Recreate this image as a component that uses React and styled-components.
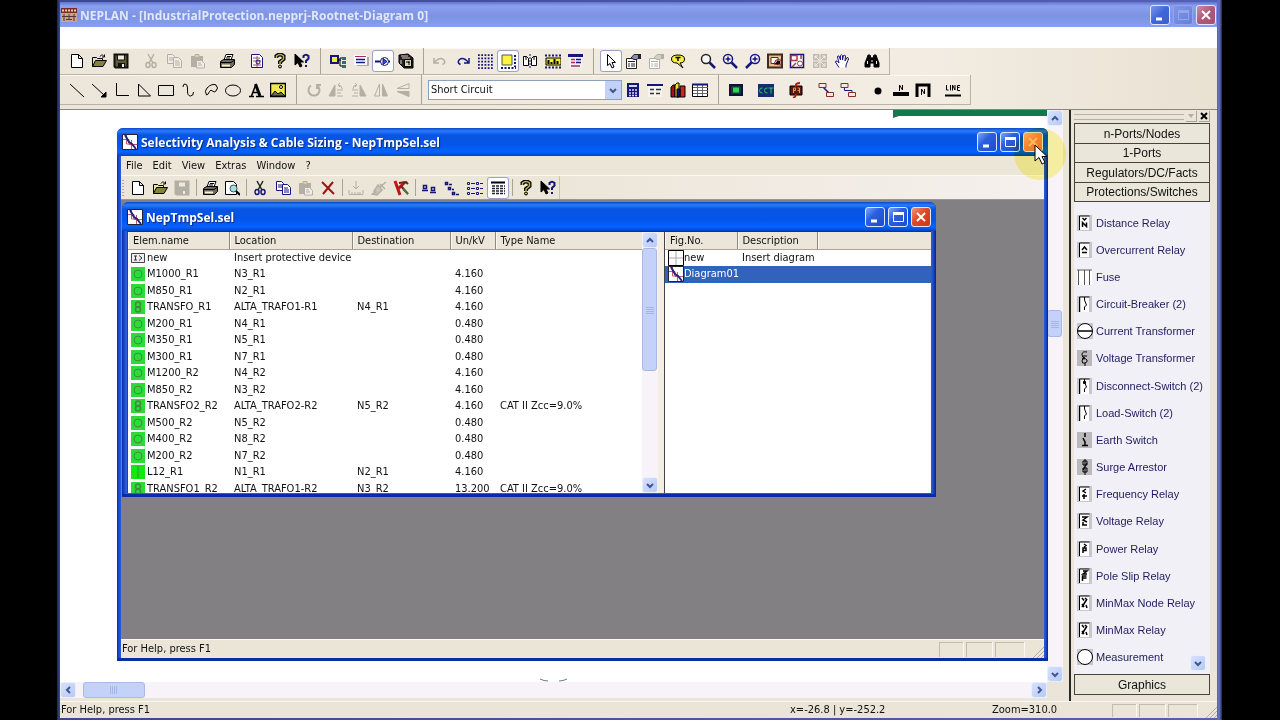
import React from "react";
import styled, { createGlobalStyle, css } from "styled-components";

const ui = `"DejaVu Sans Condensed", "Noto Sans", sans-serif`;
const caption = `"Open Sans", "Noto Sans", sans-serif`;
const arial = `"Liberation Sans", Arial, sans-serif`;

const GlobalStyle = createGlobalStyle`
  *, *::before, *::after { box-sizing: border-box; }
  body { margin: 0; background: #000; color: #111; font-family: ${ui}; font-size: 11px; line-height: 16px; }
  button, select { font: inherit; color: inherit; }
  button { margin: 0; padding: 0; border: 0; background: none; }
`;

/* ---------- icons ---------- */

const Svg = styled.svg`
  display: block;
  flex: none;
  width: ${(p) => p.$w || 16}px;
  height: ${(p) => p.$h || 16}px;
  fill: none;
  stroke: #000;
  stroke-width: 1;
`;

const navy = "#15157c";
const grey = "#b4afa4";

const paper = <path d="M2.5 1.5h7l4 4v9h-11zM9.5 1.5v4h4" fill="#fff" />;
const folder = (
  <>
    <path d="M1.5 13.5v-9h4l1 1h5v2" fill="#e9e4a0" />
    <path d="M1.5 13.5l3-6h11l-3.500 6z" fill="#85833a" />
    <path d="M9 3.500c1-2 3-2 4 0M13.500 1.500v2.500h-2.500" />
  </>
);
const floppy = (c, f) => (
  <>
    <path d="M1.500 1.500h13v13h-12l-1-1z" fill={f} stroke={c} strokeWidth="2" />
    <path d="M4.500 2h7v5h-7z" fill="#eeeae0" stroke={c} />
    <path d="M5 10h7v4h-7z" fill={c} stroke="none" />
    <path d="M9 11h2v3h-2z" fill="#eee" stroke="none" />
  </>
);
const scissors = (a, b) => (
  <>
    <path d="M5 1l5 9M11 1l-5 9" stroke={a} strokeWidth="1.500" />
    <ellipse cx="5" cy="12" rx="2" ry="2.500" stroke={b} strokeWidth="1.500" />
    <ellipse cx="11" cy="12" rx="2" ry="2.500" stroke={b} strokeWidth="1.500" />
  </>
);
const copy = (c, f) => (
  <>
    <path d="M1.500 1.500h5l2 2v7h-7zM3 5h4M3 7h4" fill={f} stroke={c} />
    <path d="M7.500 4.500h5l3 3v7h-8zM9 8h4M9 10h5M9 12h5" fill={f} stroke={c} />
  </>
);
const paste = (
  <>
    <path d="M2 3h12v11H2z" fill={grey} stroke="none" />
    <path d="M6 1.500h4v3H6z" fill="#d8d2a4" stroke={grey} />
    <path d="M7.500 7.500h5l3 3v4.500h-8zM9 10h3M9 12h4" fill="#f1ede6" stroke={grey} />
  </>
);
const printer = (
  <>
    <path d="M5 7l2-5.500h7L12 7" fill="#fff" />
    <path d="M1.500 8.500l3-2h11v5l-3 3h-11z" fill="#6c6a5e" />
    <path d="M2 9.500h10l3-2M8 3.500h4M7 5h4" />
    <path d="M3 12.500h8" stroke="#f4f0c8" strokeWidth="2" />
  </>
);
const question = (
  <>
    <path d="M4.500 5V3q3.500-3 7 0v3l-3.500 3v2" strokeWidth="4" />
    <path d="M4.500 5V3q3.500-3 7 0v3l-3.500 3v2" stroke="#b9b54c" strokeWidth="1.500" />
    <circle cx="8" cy="13.500" r="1.500" fill="#b9b54c" />
  </>
);
const contextHelp = (
  <>
    <path d="M1 1v11l3-2.500 2 4.500 2-1-2-4h3.500z" fill="#000" />
    <path d="M9.500 5V3q2.500-2.500 5 0v2.500L12 8v2M12 12v2" stroke={navy} strokeWidth="2" />
  </>
);
const lens = (mark, flip) => (
  <g transform={flip ? "translate(16 0) scale(-1 1)" : undefined}>
    <circle cx="6" cy="6" r="4.500" fill="#f7f6f6" stroke={flip || mark ? navy : "#222"} strokeWidth="1.500" />
    <path d="M9.500 9.500l5.500 5.500" stroke={navy} strokeWidth="2.500" />
    {mark}
  </g>
);
const propsheet = (c, f) => (
  <>
    <path d="M1.500 5.500h10v10h-10zM3 8.500h7M3 11h2M6 11h4M3 13h2M6 13h4" fill="#fff" stroke={c} />
    <path d="M6 5l3-3.500h4l2 2-3 3H9z" fill={f} stroke={c} />
    <path d="M13 1h3v5h-3z" fill={c} stroke="none" />
  </>
);
const pair = (c) => <path d="M1 1.500h7v4H1zM8.500 10.500h7v4h-7z" fill="#f7e9e3" stroke={c} />;

const icons = {
  page: paper,
  open: folder,
  save: floppy("#111", "#5a5b32"),
  saveOff: floppy(grey, grey),
  cutOff: scissors(grey, grey),
  cut: scissors("#222", navy),
  copyOff: copy(grey, "#f1ede6"),
  copy: copy(navy, "#fff"),
  paste,
  printer,
  pageView: (
    <>
      <path d="M2.500 1.500h8l3 3v10h-11z" fill="#fff" stroke={navy} />
      <path d="M4 5h7M4 8h8M4 12h8M8 3v11" stroke="#a04876" />
      <circle cx="9" cy="9" r="2" stroke={navy} />
    </>
  ),
  preview: (
    <>
      <path d="M1.500 1.500h8l3 3v10h-11z" fill="#fff" />
      <circle cx="9.500" cy="8.500" r="3.500" fill="#a9dfe2" stroke="#34555a" />
      <path d="M12 11l4 4" strokeWidth="2" />
    </>
  ),
  question,
  contextHelp,
  tree: (
    <>
      <path d="M1 3h7v7H1z" fill="#f0ee3c" stroke={navy} strokeWidth="2" />
      <path d="M8 7h3M10 5v8M10 5h2M10 13h2" />
      <path d="M12 4h4v3h-4zM12 8h4v3h-4zM12 12h4v3h-4z" fill="#3a6b6b" stroke="none" />
    </>
  ),
  note: (
    <>
      <path d="M4 4h12v9H4z" fill="#aaa" stroke="none" />
      <path d="M1 2h13v10H1z" fill="#fff" stroke="none" />
      <path d="M2 3.500h11" stroke="#b32a58" />
      <path d="M3 6.500h9M3 9.500h9" stroke={navy} strokeWidth="1.500" />
    </>
  ),
  node: (
    <>
      <path d="M0 8.500h6M13 8.500h2" stroke={navy} strokeWidth="2" />
      <circle cx="9.500" cy="8.500" r="4" fill="#fff" stroke={navy} />
      <path d="M8 5.500l4 3-4 3z" fill="#2a54e0" stroke={navy} />
    </>
  ),
  cube: (
    <>
      <path d="M1 2l9-1 5 4v10H6l-5-5z" fill="#222" />
      <path d="M6.500 6.500h7v7h-7z" fill="#d8d7ad" />
      <path d="M3 3h7M4 5h8" stroke="#e9c7c7" />
      <path d="M3 7v4" stroke="#ddd" />
      <path d="M8 9h3v3M11 8v2" />
    </>
  ),
  undo: <path d="M2 5v5h5M2.500 9.500q5-6 9-3 3 3-1 5" stroke={grey} strokeWidth="1.500" />,
  redo: <path d="M14 5v5H9M13.500 9.500q-5-6-9-3-3 3 1 5" stroke={navy} strokeWidth="1.500" />,
  dots: (
    <path
      d="M1 2h15M1 5.250h15M1 8.500h15M1 11.750h15M1 15h15"
      stroke={navy}
      strokeWidth="1.750"
      strokeDasharray="1.750 1.500"
    />
  ),
  select: (
    <>
      <path d="M2 2h10v10H2z" fill="#fbf53c" stroke="#555" />
      <path d="M1 15h15M15 2v12" stroke={navy} strokeWidth="2" strokeDasharray="2 1.500" />
    </>
  ),
  mirror: (
    <>
      <path d="M1.500 3.500h3l2 2v7h-5zM14.500 3.500h-3l-2 2v7h5zM4 3v4M12 3v4" fill="#fff" />
      <path d="M8 1v14" stroke={navy} strokeDasharray="2 1" />
    </>
  ),
  ruler: (
    <>
      <path d="M1 5h15v7H1z" fill="#f0ea3a" />
      <path d="M3.500 7v4M6.500 9v2M9.500 6v5M12.500 8v3" strokeWidth="2" />
      <path d="M0 2.500h16M0 14.500h16" stroke={navy} strokeWidth="2" strokeDasharray="2 1.500" />
    </>
  ),
  sheet: (
    <>
      <path d="M2 2h13v13H2z" fill="#f2f1fa" stroke="none" />
      <path d="M1 2.500h15" stroke={navy} strokeWidth="3" />
      <path d="M4 6.500h4M4 9.500h4M4 13h9" stroke="#b12b50" strokeWidth="1.500" />
      <path d="M9 6.500h5M9 9.500h5" stroke={navy} strokeWidth="1.500" />
    </>
  ),
  pointer: <path d="M4.500 1.500v11l2.500-2 2 4.500 2-1-2-4.500h3.500z" fill="#fff" />,
  props: propsheet("#222", "#8a8cb4"),
  propsOff: propsheet(grey, "#d3cec4"),
  speech: (
    <>
      <path d="M1.500 6q0-4 6.500-4t6.500 4-4.500 4l3 5-6-5q-5.500 0-5.500-4z" fill="#f3ee45" />
      <path d="M5.500 4.500h5M8 4.500V8" strokeWidth="1.500" />
    </>
  ),
  zoom: lens(null, false),
  zoomIn: lens(<path d="M6 3.500v5M3.500 6h5" stroke={navy} strokeWidth="1.500" />, false),
  zoomOut: lens(<path d="M6 3.500v5M3.500 6h5" stroke={navy} strokeWidth="1.500" />, true),
  fit: (
    <>
      <path d="M1 1.500h14v13H1z" fill="#e9c089" stroke="#3f2b20" strokeWidth="2" />
      <path d="M4 4.500h7v6H4zM7 11l2-4h5v5z" fill="#fff" stroke="#7b1d1d" />
      <path d="M8 11l2-3h3v3z" fill="#111" stroke="none" />
    </>
  ),
  overview: (
    <>
      <path d="M1.500 1.500h13v13h-13z" fill="#fff" stroke={navy} strokeWidth="1.500" />
      <path d="M2 2.500h6v5H2zM3 14l4-4M12 2v4" stroke="#a73a3a" strokeWidth="1.500" />
      <circle cx="11" cy="10.500" r="2.500" stroke="#a73a3a" />
    </>
  ),
  arrowsOff: (
    <>
      <path d="M1 1h14v14H1z" fill="#c0bbae" stroke="none" />
      <path d="M3 3l4 4M3 6V3h3M13 3L9 7M10 3h3v3M3 13l4-4M3 10v3h3M13 13L9 9M10 13h3v-3M8 1v14M1 8h14" stroke="#f4f1ea" />
    </>
  ),
  hand: (
    <path
      d="M5 14.500L1.500 9q0-2 2-.500L5 10 3.500 4q0-1.500 1.500-1l1.500 4V2.500q1-1.500 2 0V7l1-4.500q1.500-1 2 .500L11 8l2-3.500q1.500 0 1.500 1.500L12 12v2.500"
      fill="#fff"
      stroke={navy}
    />
  ),
  binoculars: (
    <>
      <path d="M3 5l1-3h2l1 3h2l1-3h2l1 3 2 5v4h-5v-4H6v4H1v-4z" fill="#000" />
      <path d="M3.500 11V8M12.500 11V8M8 7v2" stroke="#eee" />
    </>
  ),
  line: <path d="M1 2l14 13" />,
  arrow: (
    <>
      <path d="M1 2l12 11" />
      <path d="M15 15v-5l-5 5z" fill="#000" />
    </>
  ),
  polyline: <path d="M2.500 1v12.500H15" />,
  triangle: <path d="M2.500 2v12h12z" />,
  rect: <path d="M.500 3.500h15v10H.500z" />,
  curve: <path d="M2 5q0-3 2-3 2.500 0 2.500 4v3q0 5 3 5 3 0 3-4" />,
  blob: <path d="M3.500 13Q1 9 4 6q5-5 9-3 3 3 0 6-2 2-3.500 0-1.500-2-3 .500-1 3-3 3.500z" />,
  ellipse: <ellipse cx="8" cy="8.500" rx="7.500" ry="5.500" />,
  letter: (
    <>
      <path d="M1 14.500h5M8 14.500h8M5 10.500h6" strokeWidth="1.500" />
      <path d="M3.500 14L8 2" strokeWidth="1.500" />
      <path d="M7.500 2l4.500 12" strokeWidth="3" />
    </>
  ),
  picture: (
    <>
      <path d="M.500 1.500h15v13H.500z" fill="#f1e94b" strokeWidth="1.500" />
      <path d="M1 14l4-5 3 3 3-2 4 4z" fill="#6c6b50" />
      <circle cx="11" cy="5" r="1.500" fill="#fff" />
    </>
  ),
  rotateOff: <path d="M5 3.500a5.500 5.500 0 1 0 6 0M11 7V3h4" stroke={grey} strokeWidth="2" />,
  rotLeftOff: (
    <>
      <path d="M1 14l6-11v11zM9 8h6M9 11h4M9 14h6" fill={grey} stroke={grey} />
      <path d="M14 7q0-4-4-4M12 1l-2 2 2 2" stroke={grey} />
    </>
  ),
  rotRightOff: (
    <>
      <path d="M15 14L9 3v11zM7 8H1M7 11H3M7 14H1" fill={grey} stroke={grey} />
      <path d="M2 7q0-4 4-4M4 1l2 2-2 2" stroke={grey} />
    </>
  ),
  flipHOff: (
    <>
      <path d="M9.500 2v12h5z" fill={grey} stroke={grey} />
      <path d="M6.500 2v12h-5z" stroke={grey} />
    </>
  ),
  flipVOff: (
    <>
      <path d="M14 9.500H2l12 5z" fill={grey} stroke={grey} />
      <path d="M14 6.500H2l12-5z" stroke={grey} />
    </>
  ),
  calculator: (
    <>
      <path d="M2 1h12v14H2z" fill={navy} stroke="none" />
      <path d="M4 4h8" stroke="#cde" strokeWidth="2" />
      <path d="M4 8h8M4 11h8M4 13.500h8" stroke="#dde" strokeWidth="1.500" strokeDasharray="2 1" />
    </>
  ),
  report: (
    <>
      <path d="M1 3h14v12H1z" fill="#f6f4f1" stroke="none" />
      <path d="M0 3h16" stroke={navy} strokeWidth="2" />
      <path d="M3 7.500h4M9 7.500h5M3 11.500h4M9 11.500h4" stroke="#333" strokeWidth="1.500" />
    </>
  ),
  bars: (
    <>
      <path d="M1 15V5l2-2h2v12z" fill="#a11" />
      <path d="M5 15V3l2-2h2v14z" fill="#e9e23c" />
      <path d="M10 15V4h5v11z" fill="#c22" />
      <path d="M7 15V7h3v8z" fill={navy} />
    </>
  ),
  grid: (
    <>
      <path d="M.500 2.500h15v12H.500z" fill="#fff" />
      <path d="M1 5.500h15M1 8.500h15M1 11.500h15M5.500 3v11M10.500 3v11" stroke="#666" />
      <path d="M0 2.500h16" stroke={navy} strokeWidth="2" />
    </>
  ),
  chip: (
    <>
      <path d="M2 3h12v10H2z" fill="#173b2c" stroke="#101040" strokeWidth="2" />
      <path d="M5 5.500h6v5H5z" fill="#29d35c" stroke="none" />
    </>
  ),
  cct: (
    <>
      <path d="M0 2h16v13H0z" fill="#152d6c" stroke="none" />
      <path d="M4.500 6q-3-.500-3 2.500t3 2.500M9.500 6q-3-.500-3 2.500t3 2.500M10.500 6h5M13 6v5.500" stroke="#2dc763" />
    </>
  ),
  fault: (
    <>
      <path d="M2 4h12v9H2z" fill="#5b1713" />
      <path d="M5.500 11V6h2v2.500h-2M9.500 6h2v5M9.500 8.500h2" stroke="#e2a13c" />
      <path d="M12 1Q7 1 8 5M8 12q0 3-3 4" stroke="#b41c10" strokeWidth="2" />
    </>
  ),
  linkA: (
    <>
      <path d="M5 5l6 6" stroke={navy} strokeWidth="1.500" />
      {pair("#8a2b2b")}
    </>
  ),
  linkB: (
    <>
      <path d="M4.500 5v3.500h7.500v2" stroke={navy} />
      {pair("#8a2b2b")}
    </>
  ),
  bullet: <circle cx="8" cy="9" r="3.500" fill="#000" stroke="none" />,
  busN: (
    <>
      <path d="M0 10h16v4H0z" fill="#000" stroke="none" />
      <path d="M6.500 9V3l3 5V3" />
    </>
  ),
  boxN: (
    <>
      <path d="M2 15V3h12v12" strokeWidth="3" />
      <path d="M6.500 13V7l3 5V7" />
    </>
  ),
  lineTag: (
    <>
      <path d="M0 13.500h16" strokeWidth="2" />
      <path d="M1.500 3v5h2M5.500 3v5.500M7.500 8.500V3l2.500 5V3M15 3.500h-2.500v5H15M12.500 5.500h2" />
    </>
  ),
  remove: <path d="M2 2l12 12M13 2L3 14" stroke="#9c1616" strokeWidth="2" />,
  importOff: <path d="M1 10v4.500h14V10M4 12v2M7 12v2M10 12v2M12 12v2M8 1v8M5 6l3 3 3-3" stroke={grey} />,
  brushOff: (
    <path d="M15 2l-6 5M9 4l5 5M7 5l4 5-5 5-5-1 4-2-2-1z" fill="#cac5ba" stroke={grey} strokeWidth="1.500" />
  ),
  hammer: (
    <>
      <path d="M2 1l5 14M5 9l7-7" stroke="#c4141a" strokeWidth="3" />
      <path d="M6 3l7-1 2 2M8 6l7 8" stroke="#5b2b20" strokeWidth="2" />
      <path d="M10 9l5 5" stroke="#4f7a35" strokeWidth="2" />
    </>
  ),
  largeIcons: (
    <path d="M2.500 5.500h3v3h-3zM1 10.500h6M10.500 7.500h3v3h-3zM9 12.500h6" stroke={navy} strokeWidth="1.500" />
  ),
  smallIcons: (
    <path
      d="M1.500 2.500h2v2h-2zM5 4.500h3M4.500 7.500h2v2h-2zM8 9.500h2M8.500 12.500h2v2h-2zM12 14.500h3"
      stroke={navy}
      strokeWidth="1.500"
    />
  ),
  listIcons: (
    <path
      d="M.500 2.500h2v2h-2zM4 3.500h4M9.500 2.500h2v2h-2zM13 3.500h3M.500 7.500h2v2h-2zM4 8.500h4M9.500 7.500h2v2h-2zM13 8.500h3M.500 12.500h2v2h-2zM4 13.500h4M9.500 12.500h2v2h-2zM13 13.500h3"
      stroke={navy}
    />
  ),
  details: (
    <>
      <path d="M1 2.500h14" strokeWidth="2" />
      <path d="M2 6h13M2 8.500h13M2 11h13M2 13.500h13" stroke="#223" strokeWidth="1.500" strokeDasharray="3 1" />
    </>
  ),
};

function Icon({ name }) {
  return (
    <Svg viewBox="0 0 16 16" aria-hidden="true">
      {icons[name]}
    </Svg>
  );
}

function AppIcon() {
  return (
    <Svg viewBox="0 0 16 16" aria-hidden="true">
      <path d="M0 1h16v14H0z" fill="#caa389" stroke="none" />
      <path d="M0 1h16v5H0z" fill="#7a2a22" stroke="none" />
      <path d="M1 3.500h14" stroke="#f0cdb6" strokeWidth="2" strokeDasharray="2 1" />
      <path d="M1 9.500h14M3 7v7M8 7v5M13 7v7M5 12.500h6" stroke="#4c3a3a" />
    </Svg>
  );
}

function ChartIcon() {
  return (
    <Svg viewBox="0 0 16 16" aria-hidden="true">
      <path d="M.500.500h15v15H.500z" fill="#fff" stroke="#223" />
      <path d="M1 5.500h6v5h8M4.500 1v9h5M9.500 6v9" stroke="#c2586e" />
      <path d="M3 1l4 7 3 2 4 5" stroke="#23237c" strokeWidth="2" />
    </Svg>
  );
}

/* ---------- window chrome ---------- */

const AppWindow = styled.div`
  display: flex;
  flex-direction: column;
  height: 100vh;
  min-height: 600px;
  margin: 0 58px 0 57px;
  padding: 2px 5px 2px 3px;
  background: linear-gradient(90deg, #1d2452 0, #3b4893 3px, #5560b5 calc(100% - 5px), #6b76cc calc(100% - 3px), #23275c 100%);
`;

const TitleBar = styled.header`
  display: flex;
  align-items: center;
  flex: none;
  gap: 3px;
  height: ${(p) => p.$h}px;
  padding: 0 ${(p) => p.$right}px 0 ${(p) => p.$left}px;
  color: ${(p) => (p.$idle ? "#dfe7fb" : "#fff")};
  font: 700 12px/20px ${caption};
  text-shadow: ${(p) => (p.$idle ? "none" : "1px 1px 1px #0b2a80")};
  background: ${(p) =>
    p.$idle
      ? "linear-gradient(#5f74cf 0, #8ba0ee 4px, #7c93e2 14px, #84a0f0 100%)"
      : "linear-gradient(#0c49c4 0, #2a7bff 3px, #0a55e2 7px, #0355ea 60%, #0463ff 86%, #0344c0 100%)"};
`;

const Title = styled.span`
  flex: 1;
  min-width: 0;
  padding-top: 2px;
  overflow: hidden;
  white-space: nowrap;
`;

const tones = {
  blue: "linear-gradient(135deg, #7ea6f5, #2b5fe0 40%, #1c4bd0)",
  idle: "linear-gradient(135deg, #7c97ea, #3f66d8 50%, #3a5fd0)",
  faded: "linear-gradient(135deg, #7f95e6, #6580dc)",
  red: "linear-gradient(135deg, #f0957a, #dc4a26 45%, #c8391a)",
  plum: "linear-gradient(135deg, #c98ba6, #b0587a 50%, #a85070)",
  orange: "linear-gradient(135deg, #ffb184, #fb8446 45%, #f07838)",
};

const CaptionButton = styled.button`
  display: grid;
  place-items: center;
  width: 20px;
  height: 20px;
  border: 1px solid ${(p) => (p.$tone === "faded" ? "#93a6ea" : "#dfe8fb")};
  border-radius: 3px;
  background: ${(p) => tones[p.$tone]};
`;

const CaptionButtons = styled.div`
  display: flex;
  gap: ${(p) => p.$gap}px;
`;

const glyphs = {
  Minimize: <path d="M2 10h6" strokeWidth="3" />,
  Maximize: (
    <>
      <path d="M1.500 2.500h10v8h-10z" />
      <path d="M1 2.500h11" strokeWidth="3" />
    </>
  ),
  Close: <path d="M2 2l8 8M10 2l-8 8" strokeWidth="2" />,
};

const CaptionGlyph = styled(Svg)`
  stroke: ${(p) => p.$color};
`;

function WindowButtons({ tones: t, gap, colors = [] }) {
  return (
    <CaptionButtons $gap={gap}>
      {Object.keys(glyphs).map((label, i) => (
        <CaptionButton key={label} aria-label={label} $tone={t[i]}>
          <CaptionGlyph $w={12} $h={12} $color={colors[i] || "#fff"} viewBox="0 0 12 12" aria-hidden="true">
            {glyphs[label]}
          </CaptionGlyph>
        </CaptionButton>
      ))}
    </CaptionButtons>
  );
}

const BlankMenu = styled.div`
  flex: none;
  height: 21px;
  background: #fff;
`;

/* ---------- toolbars ---------- */

const ToolbarArea = styled.div`
  flex: none;
  height: 61px;
  background: linear-gradient(90deg, #ece6da, #f2ece2 75%, #e9e2d3);
`;

const Toolbar = styled.div`
  display: flex;
  align-items: center;
  width: max-content;
  height: ${(p) => p.$h}px;
  padding: 0 6px;
  border-right: 1px solid #b9b3a6;
  border-bottom: 1px solid #b9b3a6;
  box-shadow: inset 0 1px #fbf8f2;
`;

const Group = styled.div`
  display: flex;
  justify-content: space-between;
  flex: none;
  width: ${(p) => p.$w}px;
`;

const Tool = styled.button`
  display: grid;
  place-items: center;
  width: 22px;
  height: 22px;
  border-radius: 3px;
  ${(p) =>
    p.$on &&
    css`
      background: #fff;
      box-shadow: inset 0 0 0 1px #98a5c4;
    `}
`;

const Gap = styled.span`
  flex: none;
  width: 8px;
`;

const Divider = styled.span`
  flex: none;
  align-self: stretch;
  width: ${(p) => p.$w}px;
  margin: ${(p) => p.$inset || 0}px 0;
  background: linear-gradient(#a9a396, #a9a396) center / 1px 100% no-repeat;
`;

const ComboBox = styled.label`
  position: relative;
  flex: none;
  width: 194px;
`;

const Select = styled.select`
  display: block;
  width: 100%;
  height: 20px;
  padding: 0 20px 0 2px;
  border: 1px solid #8ba0bf;
  border-radius: 0;
  background: #fff;
  appearance: none;
`;

const ComboArrow = styled.span`
  position: absolute;
  top: 1px;
  right: 1px;
  display: grid;
  place-items: center;
  width: 16px;
  height: 18px;
  background: #c3d1f6;
  pointer-events: none;
`;

function Tools({ w, items }) {
  return (
    <Group $w={w}>
      {items.map(([icon, label, on]) => (
        <Tool key={icon} aria-label={label} aria-pressed={on ? true : undefined} $on={on}>
          <Icon name={icon} />
        </Tool>
      ))}
    </Group>
  );
}

/* ---------- scroll bars ---------- */

const chevrons = {
  up: "M1 6l3-3 3 3",
  down: "M1 3l3 3 3-3",
  left: "M6 1L3 4l3 3",
  right: "M3 1l3 3-3 3",
};

const ChevronSvg = styled(Svg)`
  stroke: #40568f;
  stroke-width: 2;
`;

function Chevron({ dir }) {
  return (
    <ChevronSvg $w={8} $h={8} viewBox="0 0 8 8" aria-hidden="true">
      <path d={chevrons[dir]} />
    </ChevronSvg>
  );
}

const ScrollTrack = styled.div`
  display: flex;
  flex: none;
  flex-direction: ${(p) => (p.$horizontal ? "row" : "column")};
  ${(p) => (p.$horizontal ? "height: 16px;" : "width: 16px;")}
  background: #f7f3f8;
`;

const ScrollButton = styled.button`
  display: grid;
  place-items: center;
  flex: none;
  width: 16px;
  height: 16px;
  border: 1px solid #e9effd;
  border-radius: 3px;
  background: linear-gradient(135deg, #d6e1fc, #b7c9f6);
`;

const Spacer = styled.div`
  flex: ${(p) => p.$grow ?? 1} 1 0;
`;

const Thumb = styled.div`
  display: grid;
  place-items: center;
  flex: none;
  ${(p) => (p.$horizontal ? `width: ${p.$size}px; height: 16px;` : `height: ${p.$size}px; width: 15px;`)}
  border: 1px solid #a8b8e6;
  border-radius: 3px;
  background: #c3d1fb;
  &::after {
    content: "";
    width: 8px;
    height: 8px;
    background: repeating-linear-gradient(${(p) => (p.$horizontal ? "90deg" : "0deg")}, #a3b6ea 0 1px, transparent 1px 2px);
  }
`;

function ScrollBar({ horizontal, before, size, after }) {
  return (
    <ScrollTrack $horizontal={horizontal}>
      <ScrollButton aria-label={horizontal ? "Scroll left" : "Scroll up"}>
        <Chevron dir={horizontal ? "left" : "up"} />
      </ScrollButton>
      <Spacer $grow={before} />
      <Thumb $horizontal={horizontal} $size={size} />
      <Spacer $grow={after} />
      <ScrollButton aria-label={horizontal ? "Scroll right" : "Scroll down"}>
        <Chevron dir={horizontal ? "right" : "down"} />
      </ScrollButton>
    </ScrollTrack>
  );
}

/* ---------- workspace ---------- */

const Workspace = styled.main`
  display: flex;
  flex: 1;
  min-height: 0;
  border-top: 1px solid #8b867c;
  background: #ebe5d9;
`;

const DiagramView = styled.section`
  position: relative;
  display: flex;
  flex: 1;
  flex-direction: column;
  min-width: 0;
  padding-bottom: 3px;
`;

const DiagramRow = styled.div`
  display: flex;
  flex: 1;
  min-height: 0;
`;

const Canvas = styled.div`
  display: flex;
  flex: 1;
  flex-direction: column;
  justify-content: space-between;
  align-items: flex-end;
  background: #fff;
`;

const BottomRow = styled.div`
  display: flex;
  flex: none;
  & > :first-child { flex: 1; }
  &::after { content: ""; width: 16px; }
`;

const ArcMark = styled(Svg)`
  align-self: center;
`;

const ToolWindow = styled.section`
  position: absolute;
  inset: 18px 15px 40px 57px;
  display: flex;
  flex-direction: column;
  padding: 0 4px 3px;
  border-radius: 6px 6px 0 0;
  background: linear-gradient(90deg, #0a2ba8, #2659d8 3px, #2659d8 calc(100% - 3px), #0a2090);
  box-shadow: inset 0 -3px #0b2ca8;
  overflow: hidden;
`;

const WideTitle = styled.div`
  margin: 0 -4px;
`;

const MenuBar = styled.nav`
  display: flex;
  flex: none;
  gap: 10px;
  height: 20px;
  padding: 1px 5px 0;
  background: #ece6d9;
  border-bottom: 1px solid #fbf9f4;
`;

const ToolStrip = styled.div`
  flex: none;
  height: 24px;
  background: linear-gradient(90deg, #ece6d9 48%, #f6f0ee);
  border-bottom: 1px solid #9a968d;
`;

const Strip = styled.div`
  display: flex;
  align-items: center;
  width: max-content;
  height: 100%;
  border-right: 1px solid #c9c3b5;
`;

const Grip = styled.span`
  width: 6px;
  height: 16px;
  background: repeating-linear-gradient(#b1ab9d 0 1px, transparent 1px 3px) 1px 0 / 2px 100% no-repeat;
`;

const MdiArea = styled.div`
  position: relative;
  flex: 1;
  min-height: 0;
  background: #838083;
`;

const DocWindow = styled.section`
  position: absolute;
  top: 2px;
  left: 1px;
  width: calc(100% - 109px);
  padding: 0 5px 4px;
  border-radius: 6px 6px 0 0;
  background: linear-gradient(90deg, #0a2ba8, #2a5fe0 4px, #2659d8 calc(100% - 4px), #0a1f92);
  box-shadow: inset 0 -3px #0b2ca8;
  overflow: hidden;
`;

const DocTitle = styled.div`
  margin: 0 -5px;
`;

const Panes = styled.div`
  display: flex;
  height: 262px;
  border-top: 1px solid #333;
  background: #ebe5d9;
`;

const Pane = styled.div`
  display: flex;
  flex: ${(p) => p.$flex};
  min-width: 0;
  background: #fff;
  border-left: 1px solid #444;
`;

const Splitter = styled.div`
  flex: none;
  width: 6px;
  background: #f3ede4;
`;

const TableClip = styled.div`
  flex: 1;
  min-width: 0;
  overflow: hidden;
`;

const Table = styled.table`
  width: 100%;
  border-collapse: collapse;
  table-layout: fixed;
`;

const HeadCell = styled.th`
  height: 17px;
  padding: 2px 0 0 5px;
  border-right: 1px solid #8e897e;
  border-bottom: 1px solid #aaa497;
  background: #ebe6d9;
  box-shadow: inset 1px 0 #faf8f2;
  font-weight: 400;
  line-height: 14px;
  text-align: left;
  white-space: nowrap;
  &:last-child { border-right: 0; }
`;

const Row = styled.tr`
  height: 16px;
  &:nth-child(even) { height: 17px; }
`;

const Cell = styled.td`
  padding: 0 0 0 ${(p) => (p.$first ? 3 : 5)}px;
  line-height: 16px;
  white-space: nowrap;
  ${(p) => p.$selected && css`background: #3163bd; color: #fff;`}
`;

const NameCell = styled.span`
  display: flex;
  align-items: center;
  height: 16px;
`;

const DeviceMark = styled(Svg)`
  margin: 0 2px 0 0;
  stroke: #418b41;
`;

function DeviceIcon({ kind }) {
  return (
    <DeviceMark $w={14} $h={14} viewBox="0 0 14 14" aria-hidden="true">
      {kind === "new" ? (
        <>
          <path d="M.500 2.500h13v9H.500z" fill="#eee" stroke="#444" />
          <path d="M3 5h3M3 9h3M4.500 5v4M8 4.500l3 2.500-3 2.500" stroke="#333" />
        </>
      ) : (
        <path d="M0 0h14v14H0z" fill={kind === "line" ? "#12e812" : "#2bdc36"} stroke="none" />
      )}
      {kind === "motor" && <circle cx="7" cy="7" r="4" />}
      {kind === "trafo" && (
        <>
          <circle cx="7" cy="4.500" r="2.500" strokeWidth="1.500" />
          <circle cx="7" cy="9.500" r="2.500" strokeWidth="1.500" />
        </>
      )}
      {kind === "line" && <path d="M7 1v12" />}
    </DeviceMark>
  );
}

const StatusBar = styled.footer`
  display: flex;
  align-items: center;
  flex: none;
  height: ${(p) => p.$h}px;
  padding-left: 1px;
  border-top: 1px solid #fbf7f2;
  background: #ebe5d8;
`;

const StatusHint = styled.span`
  flex: 1;
`;

const StatusText = styled.span`
  flex: none;
  width: ${(p) => p.$w}px;
`;

const StatusCell = styled.span`
  flex: none;
  align-self: stretch;
  width: ${(p) => p.$w}px;
  margin: 2px 3px 1px 0;
  border-top: 1px solid #c2bcae;
  border-left: 1px solid #c2bcae;
  box-shadow: 1px 0 #fbf8f2;
`;

const GripSvg = styled(Svg)`
  align-self: flex-end;
  margin-left: 5px;
  stroke: #b3ad9f;
`;

const SizeGrip = () => (
  <GripSvg $w={12} $h={12} viewBox="0 0 12 12" aria-hidden="true">
    <path d="M1 12L12 1M5 12l7-7M9 12l3-3" />
  </GripSvg>
);

/* ---------- symbol palette ---------- */

const Palette = styled.aside`
  display: flex;
  flex: none;
  flex-direction: column;
  width: 154px;
  padding: 0 7px 6px 11px;
  background: linear-gradient(90deg, #ebe5d9 0 6px, #2b2926 6px 8px, #ebe5d9 8px);
`;

const PaletteHead = styled.div`
  display: flex;
  align-items: center;
  gap: 2px;
  height: 13px;
  flex: none;
`;

const PaletteGrip = styled.span`
  flex: 1;
  height: 6px;
  border: solid #b8b2a5;
  border-width: 1px 0;
`;

const MiniButton = styled.button`
  display: grid;
  place-items: center;
  width: 11px;
  height: 11px;
  border: solid #aaa497;
  border-width: 0 1px 1px 0;
`;

const CategoryButton = styled.button`
  flex: none;
  height: 20px;
  margin-top: ${(p) => (p.$overlap ? -1 : 0)}px;
  border: 1px solid #46433d;
  background: #ebe6da;
  font: 12px/18px ${arial};
  &:nth-of-type(odd) { height: 21px; }
`;

const SymbolList = styled.ul`
  position: relative;
  display: flex;
  flex: 1;
  flex-direction: column;
  min-height: 0;
  margin: 0;
  padding: 7px 0 3px;
  background: #f2f0f7;
  list-style: none;
`;

const Symbol = styled.li`
  display: flex;
  align-items: center;
  flex: 1;
  gap: 3px;
  padding-left: 3px;
  color: #1f1b5e;
  font: 11px/16px ${arial};
  white-space: nowrap;
`;

const ScrollMore = styled.div`
  position: absolute;
  right: 4px;
  bottom: 3px;
`;

const relayMarks = {
  Z: <path d="M5.500 3l2 2 2-2M5.500 12V7.500l4 4V7.500" />,
  I: <path d="M5 8l2.500-3L10 8M5 10.500h5" />,
  F: <path d="M9 3L6 5l3 2M5 10h5M7 8v5" />,
  U: <path d="M5 4h5L6 7l4 2M5 12h5M6 9v3" />,
  P: <path d="M6 12V7h3v2.500H6M7 3l2 1.500L7 6" />,
  S: <path d="M5.500 13V8h4M5.500 10h4M6 3h4L6 6h4" />,
  M: <path d="M5 12l5-8M5 3l2 2.500M8 3l2 2M5 9l2 3M9 10l1 3" />,
};

function SymbolIcon({ kind }) {
  if (kind === "ct" || kind === "meter") {
    return (
      <Svg viewBox="0 0 16 16" aria-hidden="true">
        <path d="M0 0h16v16H0z" fill="#c9c6c9" stroke="none" />
        <circle cx="8" cy="8" r="7.500" fill="#fff" />
        {kind === "ct" && <path d="M1 8h14" strokeWidth="1.500" />}
      </Svg>
    );
  }
  if (kind === "vt" || kind === "earth" || kind === "surge") {
    return (
      <Svg viewBox="0 0 16 16" aria-hidden="true">
        <path d="M0 0h15v16H0z" fill="#bcb9bc" stroke="none" />
        {kind === "vt" && <path d="M10 2q-5-1-5 2.500T8 8q-3 0-3 3t3 2 2-3-5-1M6 6h4M8 13v3" />}
        {kind === "earth" && <path d="M8 1v4M6 6l2 4v4M5 13.500h6" strokeWidth="1.500" />}
        {kind === "surge" && <path d="M6 2h4v4H6zM6 9h4v4H6zM10 4L6 11M8 0v16" />}
      </Svg>
    );
  }
  if (kind === "fuse") {
    return (
      <Svg viewBox="0 0 16 16" aria-hidden="true">
        <path d="M0 0h15v16H0z" fill="#fff" stroke="none" />
        <path d="M1.500 16V1M7.500 16V1M12.500 16V1M0 1h15" stroke="#555" />
      </Svg>
    );
  }
  if (kind.startsWith("sw")) {
    return (
      <Svg viewBox="0 0 16 16" aria-hidden="true">
        <path d="M0 0h15v16H0z" fill="#c9c6c9" stroke="none" />
        <path d="M4 1h8v15H4z" fill="#fff" stroke="none" />
        <path d="M2.500 16V1h10M7.500 1v3l2 5-2 2v3" />
        {kind === "swd" && <path d="M6.500 3.500h2v2h-2z" fill="#000" />}
      </Svg>
    );
  }
  return (
    <Svg viewBox="0 0 16 16" aria-hidden="true">
      <path d="M0 0h15v16H0z" fill="#c9c6c9" stroke="none" />
      <path d="M3 1h9v14H3z" fill="#fff" stroke="none" />
      <path d="M2.500 15V1h10" />
      <g strokeWidth="1.500">{relayMarks[kind]}</g>
    </Svg>
  );
}

/* ---------- pointer ---------- */

const Highlight = styled.div`
  position: absolute;
  top: 18px;
  right: -3px;
  width: 52px;
  height: 52px;
  border-radius: 50%;
  background: #fdf9a6;
  mix-blend-mode: multiply;
  pointer-events: none;
`;

const MousePointer = styled(Svg)`
  position: absolute;
  top: 34px;
  right: 15px;
  pointer-events: none;
`;

/* ---------- data ---------- */

const elements = [
  ["new", "new", "Insert protective device"],
  ["motor", "M1000_R1", "N3_R1", "", "4.160"],
  ["motor", "M850_R1", "N2_R1", "", "4.160"],
  ["trafo", "TRANSFO_R1", "ALTA_TRAFO1-R1", "N4_R1", "4.160"],
  ["motor", "M200_R1", "N4_R1", "", "0.480"],
  ["motor", "M350_R1", "N5_R1", "", "0.480"],
  ["motor", "M300_R1", "N7_R1", "", "0.480"],
  ["motor", "M1200_R2", "N4_R2", "", "4.160"],
  ["motor", "M850_R2", "N3_R2", "", "4.160"],
  ["trafo", "TRANSFO2_R2", "ALTA_TRAFO2-R2", "N5_R2", "4.160", "CAT II Zcc=9.0%"],
  ["motor", "M500_R2", "N5_R2", "", "0.480"],
  ["motor", "M400_R2", "N8_R2", "", "0.480"],
  ["motor", "M200_R2", "N7_R2", "", "0.480"],
  ["line", "L12_R1", "N1_R1", "N2_R1", "4.160"],
  ["trafo", "TRANSFO1_R2", "ALTA_TRAFO1-R2", "N3_R2", "13.200", "CAT II Zcc=9.0%"],
];

const symbols = [
  ["Z", "Distance Relay"],
  ["I", "Overcurrent Relay"],
  ["fuse", "Fuse"],
  ["sw", "Circuit-Breaker (2)"],
  ["ct", "Current Transformer"],
  ["vt", "Voltage Transformer"],
  ["swd", "Disconnect-Switch (2)"],
  ["swl", "Load-Switch (2)"],
  ["earth", "Earth Switch"],
  ["surge", "Surge Arrestor"],
  ["F", "Frequency Relay"],
  ["U", "Voltage Relay"],
  ["P", "Power Relay"],
  ["S", "Pole Slip Relay"],
  ["M", "MinMax Node Relay"],
  ["M", "MinMax Relay"],
  ["meter", "Measurement"],
];

/* ---------- parts ---------- */

function MainToolbars() {
  return (
    <ToolbarArea>
      <Toolbar $h={27}>
        <Tools w={66} items={[["page", "New"], ["open", "Open"], ["save", "Save"]]} />
        <Gap />
        <Tools w={68} items={[["cutOff", "Cut"], ["copyOff", "Copy"], ["paste", "Paste"]]} />
        <Gap />
        <Tools w={22} items={[["printer", "Print"]]} />
        <Gap />
        <Tools w={67} items={[["pageView", "Page view"], ["question", "Help"], ["contextHelp", "Context help"]]} />
        <Divider $w={14} />
        <Tools w={90} items={[["tree", "Tree"], ["note", "Note"], ["node", "Node", true], ["cube", "Library"]]} />
        <Divider $w={12} />
        <Tools
          w={157}
          items={[
            ["undo", "Undo"],
            ["redo", "Redo"],
            ["dots", "Grid"],
            ["select", "Select", true],
            ["mirror", "Mirror"],
            ["ruler", "Ruler"],
            ["sheet", "Sheet"],
          ]}
        />
        <Divider $w={14} />
        <Tools
          w={89}
          items={[["pointer", "Pointer", true], ["props", "Properties"], ["propsOff", "Edit"], ["speech", "Comment"]]}
        />
        <Gap />
        <Tools
          w={156}
          items={[
            ["zoom", "Zoom"],
            ["zoomIn", "Zoom in"],
            ["zoomOut", "Zoom out"],
            ["fit", "Fit"],
            ["overview", "Overview"],
            ["arrowsOff", "Expand"],
            ["hand", "Pan"],
          ]}
        />
        <Gap />
        <Tools w={22} items={[["binoculars", "Find"]]} />
      </Toolbar>
      <Toolbar $h={30}>
        <Tools
          w={223}
          items={[
            ["line", "Line"],
            ["arrow", "Arrow"],
            ["polyline", "Polyline"],
            ["triangle", "Polygon"],
            ["rect", "Rectangle"],
            ["curve", "Curve"],
            ["blob", "Closed curve"],
            ["ellipse", "Ellipse"],
            ["letter", "Text"],
            ["picture", "Picture"],
          ]}
        />
        <Divider $w={14} />
        <Tools
          w={111}
          items={[
            ["rotateOff", "Rotate"],
            ["rotLeftOff", "Rotate left"],
            ["rotRightOff", "Rotate right"],
            ["flipHOff", "Flip horizontally"],
            ["flipVOff", "Flip vertically"],
          ]}
        />
        <Divider $w={14} />
        <ComboBox>
          <Select aria-label="Analysis" defaultValue="Short Circuit">
            <option>Short Circuit</option>
          </Select>
          <ComboArrow>
            <Chevron dir="down" />
          </ComboArrow>
        </ComboBox>
        <Tools
          w={89}
          items={[["calculator", "Calculate"], ["report", "Report"], ["bars", "Chart"], ["grid", "Table"]]}
        />
        <Divider $w={14} />
        <Tools w={112} items={[["chip", "Element"], ["cct", "Circuit"], ["fault", "Fault"], ["linkA", "Link"]]} />
        <Tools w={22} items={[["linkB", "Stepped link"]]} />
        <Gap />
        <Tools w={67} items={[["bullet", "Node"], ["busN", "Busbar"], ["boxN", "Box"]]} />
        <Gap />
        <Tools w={22} items={[["lineTag", "Line"]]} />
      </Toolbar>
    </ToolbarArea>
  );
}

function ElementTable() {
  return (
    <Table>
      <colgroup>
        <col width="101" />
        <col width="123" />
        <col width="98" />
        <col width="45" />
        <col />
      </colgroup>
      <thead>
        <tr>
          {["Elem.name", "Location", "Destination", "Un/kV", "Type Name"].map((h) => (
            <HeadCell key={h}>{h}</HeadCell>
          ))}
        </tr>
      </thead>
      <tbody>
        {elements.map(([kind, name, ...rest]) => (
          <Row key={name}>
            <Cell $first>
              <NameCell>
                <DeviceIcon kind={kind} />
                {name}
              </NameCell>
            </Cell>
            {[0, 1, 2, 3].map((i) => (
              <Cell key={i}>{rest[i]}</Cell>
            ))}
          </Row>
        ))}
      </tbody>
    </Table>
  );
}

function DiagramTable() {
  return (
    <Table>
      <colgroup>
        <col width="72" />
        <col width="80" />
        <col />
      </colgroup>
      <thead>
        <tr>
          <HeadCell>Fig.No.</HeadCell>
          <HeadCell>Description</HeadCell>
          <HeadCell />
        </tr>
      </thead>
      <tbody>
        <Row>
          <Cell $first>
            <NameCell>
              <Svg viewBox="0 0 16 16" aria-hidden="true">
                <path d="M.500.500h15v15H.500z" fill="#fff" />
                <path d="M8 1v14M1 8h14" stroke="#aaa" />
              </Svg>
              new
            </NameCell>
          </Cell>
          <Cell colSpan={2}>Insert diagram</Cell>
        </Row>
        <Row>
          <Cell $first $selected>
            <NameCell>
              <ChartIcon />
              Diagram01
            </NameCell>
          </Cell>
          <Cell $selected colSpan={2} />
        </Row>
      </tbody>
    </Table>
  );
}

function SelectivityWindow() {
  return (
    <ToolWindow>
      <WideTitle>
        <TitleBar $h={28} $left={5} $right={5}>
          <ChartIcon />
          <Title>Selectivity Analysis &amp; Cable Sizing - NepTmpSel.sel</Title>
          <WindowButtons gap={3} tones={["blue", "blue", "orange"]} colors={["#fff", "#fff", "#f9c48c"]} />
        </TitleBar>
      </WideTitle>
      <MenuBar>
        {["File", "Edit", "View", "Extras", "Window", "?"].map((m) => (
          <button key={m}>{m}</button>
        ))}
      </MenuBar>
      <ToolStrip>
        <Strip>
          <Grip />
          <Tools w={66} items={[["page", "New"], ["open", "Open"], ["saveOff", "Save"]]} />
          <Divider $w={6} $inset={3} />
          <Tools w={44} items={[["printer", "Print"], ["preview", "Preview"]]} />
          <Divider $w={6} $inset={3} />
          <Tools w={90} items={[["cut", "Cut"], ["copy", "Copy"], ["paste", "Paste"], ["remove", "Delete"]]} />
          <Divider $w={6} $inset={3} />
          <Tools w={67} items={[["importOff", "Import"], ["brushOff", "Format"], ["hammer", "Options"]]} />
          <Divider $w={6} $inset={3} />
          <Tools
            w={91}
            items={[
              ["largeIcons", "Large icons"],
              ["smallIcons", "Small icons"],
              ["listIcons", "List"],
              ["details", "Details", true],
            ]}
          />
          <Divider $w={6} $inset={3} />
          <Tools w={44} items={[["question", "Help"], ["contextHelp", "Context help"]]} />
        </Strip>
      </ToolStrip>
      <MdiArea>
        <DocWindow>
          <DocTitle>
            <TitleBar $h={29} $left={5} $right={5}>
              <ChartIcon />
              <Title>NepTmpSel.sel</Title>
              <WindowButtons gap={3} tones={["blue", "blue", "red"]} />
            </TitleBar>
          </DocTitle>
          <Panes>
            <Pane $flex="1">
              <TableClip>
                <ElementTable />
              </TableClip>
              <ScrollBar before={0} size={123} after={1} />
            </Pane>
            <Splitter />
            <Pane $flex="0 0 267px">
              <TableClip>
                <DiagramTable />
              </TableClip>
            </Pane>
          </Panes>
        </DocWindow>
      </MdiArea>
      <StatusBar $h={19}>
        <StatusHint>For Help, press F1</StatusHint>
        <StatusCell $w={24} />
        <StatusCell $w={26} />
        <StatusCell $w={29} />
        <SizeGrip />
      </StatusBar>
    </ToolWindow>
  );
}

function SymbolPalette() {
  return (
    <Palette>
      <PaletteHead>
        <PaletteGrip />
        <MiniButton aria-label="Options">
          <Svg $w={6} $h={4} viewBox="0 0 6 4" aria-hidden="true">
            <path d="M0 0h6L3 4z" fill="#b3ad9f" stroke="none" />
          </Svg>
        </MiniButton>
        <MiniButton aria-label="Close palette">
          <Svg $w={8} $h={8} viewBox="0 0 8 8" aria-hidden="true">
            <path d="M1 1l6 6M7 1L1 7" strokeWidth="2" />
          </Svg>
        </MiniButton>
      </PaletteHead>
      {["n-Ports/Nodes", "1-Ports", "Regulators/DC/Facts", "Protections/Switches"].map((c, i) => (
        <CategoryButton key={c} $overlap={i > 0}>
          {c}
        </CategoryButton>
      ))}
      <SymbolList>
        {symbols.map(([kind, label]) => (
          <Symbol key={label}>
            <SymbolIcon kind={kind} />
            {label}
          </Symbol>
        ))}
        <ScrollMore>
          <ScrollButton aria-label="More symbols">
            <Chevron dir="down" />
          </ScrollButton>
        </ScrollMore>
      </SymbolList>
      <CategoryButton>Graphics</CategoryButton>
    </Palette>
  );
}

export default function App() {
  return (
    <>
      <GlobalStyle />
      <AppWindow>
        <TitleBar $idle $h={25} $left={1} $right={1}>
          <AppIcon />
          <Title>NEPLAN - [IndustrialProtection.nepprj-Rootnet-Diagram 0]</Title>
          <WindowButtons gap={3} tones={["idle", "faded", "plum"]} colors={["#fff", "#93a6ea", "#fff"]} />
        </TitleBar>
        <BlankMenu />
        <MainToolbars />
        <Workspace>
          <DiagramView>
            <DiagramRow>
              <Canvas>
                <Svg $w={154} $h={8} viewBox="0 0 154 8" aria-hidden="true">
                  <path d="M0 0h154v6H6L0 8z" fill="#107a4c" stroke="none" />
                </Svg>
                <ArcMark $w={30} $h={4} viewBox="0 0 30 4" aria-hidden="true">
                  <path d="M1 1q4 2 8 2M20 3q4 0 8-2" stroke="#6f7f78" />
                </ArcMark>
              </Canvas>
              <ScrollBar before={184} size={27} after={329} />
            </DiagramRow>
            <BottomRow>
              <ScrollBar horizontal before={7} size={62} after={886} />
            </BottomRow>
            <SelectivityWindow />
            <Highlight />
            <MousePointer $w={14} $h={22} viewBox="0 0 14 22" aria-hidden="true">
              <path d="M1 1v16l4-3.500 3 6.500 3-1.500-3-6h5z" fill="#fff" />
            </MousePointer>
          </DiagramView>
          <SymbolPalette />
        </Workspace>
        <StatusBar $h={17}>
          <StatusHint>For Help, press F1</StatusHint>
          <StatusText $w={202}>x=-26.8 | y=-252.2</StatusText>
          <StatusText $w={120}>Zoom=310.0</StatusText>
          <StatusCell $w={24} />
          <StatusCell $w={26} />
          <StatusCell $w={29} />
          <SizeGrip />
        </StatusBar>
      </AppWindow>
    </>
  );
}
